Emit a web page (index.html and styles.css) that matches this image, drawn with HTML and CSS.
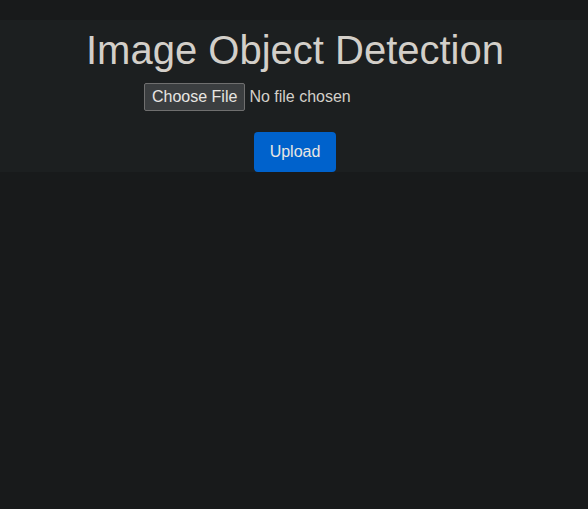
FILE: index.html
```html
<!DOCTYPE html>
<html lang="en">
<head>
<meta charset="utf-8">
<title>Image Object Detection</title>
<link rel="stylesheet" href="styles.css">
</head>
<body>
  <form class="panel" action="#" method="post" enctype="multipart/form-data">
    <h1 class="title">Image Object Detection</h1>
    <input class="file-input" type="file" name="file">
    <button class="upload" type="submit">Upload</button>
  </form>
</body>
</html>
```

FILE: styles.css
```css
html, body {
  margin: 0;
  padding: 0;
  background: #181a1b;
  font-family: "Liberation Sans", Arial, sans-serif;
  color: #d3cfc9;
}

.panel {
  margin: 20px 0 0;
  padding: 7px 0 0 2px;
  background: #1c1f20;
  display: flex;
  flex-direction: column;
  align-items: center;
}

.title {
  margin: 0 0 10px;
  font-size: 40px;
  font-weight: normal;
  line-height: 46px;
  color: #d3cfc9;
}

.file-input {
  display: block;
  width: 302px;
  font-family: "Liberation Sans", Arial, sans-serif;
  font-size: 16px;
  color: #d3cfc9;
  margin: 0 0 21px;
}

.file-input::file-selector-button {
  font-family: "Liberation Sans", Arial, sans-serif;
  font-size: 16px;
  line-height: 18px;
  height: 28px;
  padding: 4px 7px;
  margin: 0 4px 0 0;
  background: #3b3e40;
  color: #e8e6e3;
  border: 1px solid #6f6f6f;
  border-radius: 2px;
}

.upload {
  font-family: "Liberation Sans", Arial, sans-serif;
  font-size: 16px;
  line-height: 18px;
  height: 40px;
  padding: 0 16px;
  background: #0062cc;
  color: #e8e6e3;
  border: none;
  border-radius: 4px;
}
```
